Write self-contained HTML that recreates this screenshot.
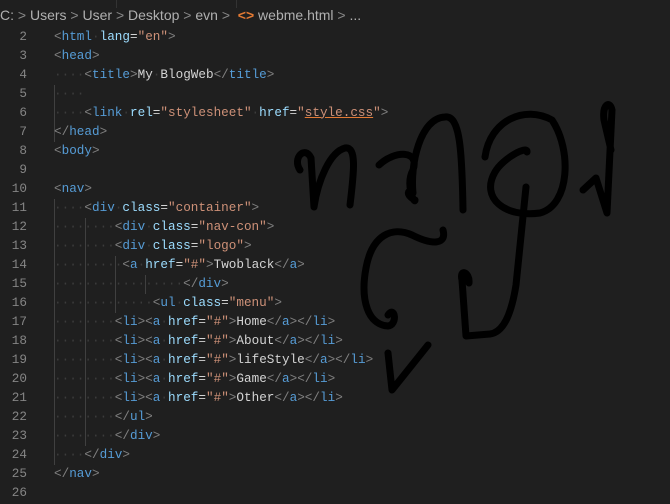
<!DOCTYPE html>
<html><head><meta charset="utf-8"><style>
html,body{margin:0;padding:0;width:670px;height:497px;overflow:hidden;background:#1f1f1f;}
.bc{position:absolute;left:0;top:0;width:670px;height:26px;font:14px "Liberation Sans",sans-serif;color:#b0b0b0;line-height:31px;white-space:pre;}
.l{position:absolute;left:0;width:670px;height:19px;line-height:19px;font:12.67px "Liberation Mono",monospace;white-space:pre;color:#d4d4d4;}
.n{position:absolute;left:0;width:27px;color:#858585;text-align:right;}
.c{position:absolute;left:54px;}
.p{color:#808080}.t{color:#569cd6}.a{color:#9cdcfe}.s{color:#ce9178}.d{color:#3c3c3c}
.g{position:absolute;width:1px;background:#404040;}
</style></head><body>
<div class="bc">C: <span style="color:#888">&gt;</span> Users <span style="color:#888">&gt;</span> User <span style="color:#888">&gt;</span> Desktop <span style="color:#888">&gt;</span> evn <span style="color:#888">&gt;</span>  <span style="color:#e37933;font-weight:bold">&lt;&gt;</span> webme.html <span style="color:#888">&gt;</span> ...</div>
<div style="position:absolute;left:116px;top:0;width:1px;height:8px;background:#333"></div>
<div style="position:absolute;left:236px;top:0;width:1px;height:8px;background:#333"></div>

<div class="g" style="left:54px;top:85px;height:57px"></div>
<div class="g" style="left:54px;top:199px;height:266px"></div>
<div class="g" style="left:85px;top:218px;height:228px"></div>
<div class="g" style="left:115px;top:256px;height:57px"></div>
<div class="g" style="left:145px;top:275px;height:19px"></div>

<div class="l" style="top:28.5px"><span class="n">2</span><span class="c"><span class="p">&lt;</span><span class="t">html</span><span class="d">·</span><span class="a">lang</span>=<span class="s">"en"</span><span class="p">&gt;</span></span></div>
<div class="l" style="top:47.5px"><span class="n">3</span><span class="c"><span class="p">&lt;</span><span class="t">head</span><span class="p">&gt;</span></span></div>
<div class="l" style="top:66.5px"><span class="n">4</span><span class="c"><span class="d">····</span><span class="p">&lt;</span><span class="t">title</span><span class="p">&gt;</span>My<span class="d">·</span>BlogWeb<span class="p">&lt;/</span><span class="t">title</span><span class="p">&gt;</span></span></div>
<div class="l" style="top:85.5px"><span class="n">5</span><span class="c"><span class="d">····</span></span></div>
<div class="l" style="top:104.5px"><span class="n">6</span><span class="c"><span class="d">····</span><span class="p">&lt;</span><span class="t">link</span><span class="d">·</span><span class="a">rel</span>=<span class="s">"stylesheet"</span><span class="d">·</span><span class="a">href</span>=<span class="s">"<u style="text-decoration-color:#e37933">style.css</u>"</span><span class="p">&gt;</span></span></div>
<div class="l" style="top:123.5px"><span class="n">7</span><span class="c"><span class="p">&lt;/</span><span class="t">head</span><span class="p">&gt;</span></span></div>
<div class="l" style="top:142.5px"><span class="n">8</span><span class="c"><span class="p">&lt;</span><span class="t">body</span><span class="p">&gt;</span></span></div>
<div class="l" style="top:161.5px"><span class="n">9</span></div>
<div class="l" style="top:180.5px"><span class="n">10</span><span class="c"><span class="p">&lt;</span><span class="t">nav</span><span class="p">&gt;</span></span></div>
<div class="l" style="top:199.5px"><span class="n">11</span><span class="c"><span class="d">····</span><span class="p">&lt;</span><span class="t">div</span><span class="d">·</span><span class="a">class</span>=<span class="s">"container"</span><span class="p">&gt;</span></span></div>
<div class="l" style="top:218.5px"><span class="n">12</span><span class="c"><span class="d">········</span><span class="p">&lt;</span><span class="t">div</span><span class="d">·</span><span class="a">class</span>=<span class="s">"nav-con"</span><span class="p">&gt;</span></span></div>
<div class="l" style="top:237.5px"><span class="n">13</span><span class="c"><span class="d">········</span><span class="p">&lt;</span><span class="t">div</span><span class="d">·</span><span class="a">class</span>=<span class="s">"logo"</span><span class="p">&gt;</span></span></div>
<div class="l" style="top:256.5px"><span class="n">14</span><span class="c"><span class="d">·········</span><span class="p">&lt;</span><span class="t">a</span><span class="d">·</span><span class="a">href</span>=<span class="s">"#"</span><span class="p">&gt;</span>Twoblack<span class="p">&lt;/</span><span class="t">a</span><span class="p">&gt;</span></span></div>
<div class="l" style="top:275.5px"><span class="n">15</span><span class="c"><span class="d">·················</span><span class="p">&lt;/</span><span class="t">div</span><span class="p">&gt;</span></span></div>
<div class="l" style="top:294.5px"><span class="n">16</span><span class="c"><span class="d">·············</span><span class="p">&lt;</span><span class="t">ul</span><span class="d">·</span><span class="a">class</span>=<span class="s">"menu"</span><span class="p">&gt;</span></span></div>
<div class="l" style="top:313.5px"><span class="n">17</span><span class="c"><span class="d">········</span><span class="p">&lt;</span><span class="t">li</span><span class="p">&gt;&lt;</span><span class="t">a</span><span class="d">·</span><span class="a">href</span>=<span class="s">"#"</span><span class="p">&gt;</span>Home<span class="p">&lt;/</span><span class="t">a</span><span class="p">&gt;&lt;/</span><span class="t">li</span><span class="p">&gt;</span></span></div>
<div class="l" style="top:332.5px"><span class="n">18</span><span class="c"><span class="d">········</span><span class="p">&lt;</span><span class="t">li</span><span class="p">&gt;&lt;</span><span class="t">a</span><span class="d">·</span><span class="a">href</span>=<span class="s">"#"</span><span class="p">&gt;</span>About<span class="p">&lt;/</span><span class="t">a</span><span class="p">&gt;&lt;/</span><span class="t">li</span><span class="p">&gt;</span></span></div>
<div class="l" style="top:351.5px"><span class="n">19</span><span class="c"><span class="d">········</span><span class="p">&lt;</span><span class="t">li</span><span class="p">&gt;&lt;</span><span class="t">a</span><span class="d">·</span><span class="a">href</span>=<span class="s">"#"</span><span class="p">&gt;</span>lifeStyle<span class="p">&lt;/</span><span class="t">a</span><span class="p">&gt;&lt;/</span><span class="t">li</span><span class="p">&gt;</span></span></div>
<div class="l" style="top:370.5px"><span class="n">20</span><span class="c"><span class="d">········</span><span class="p">&lt;</span><span class="t">li</span><span class="p">&gt;&lt;</span><span class="t">a</span><span class="d">·</span><span class="a">href</span>=<span class="s">"#"</span><span class="p">&gt;</span>Game<span class="p">&lt;/</span><span class="t">a</span><span class="p">&gt;&lt;/</span><span class="t">li</span><span class="p">&gt;</span></span></div>
<div class="l" style="top:389.5px"><span class="n">21</span><span class="c"><span class="d">········</span><span class="p">&lt;</span><span class="t">li</span><span class="p">&gt;&lt;</span><span class="t">a</span><span class="d">·</span><span class="a">href</span>=<span class="s">"#"</span><span class="p">&gt;</span>Other<span class="p">&lt;/</span><span class="t">a</span><span class="p">&gt;&lt;/</span><span class="t">li</span><span class="p">&gt;</span></span></div>
<div class="l" style="top:408.5px"><span class="n">22</span><span class="c"><span class="d">········</span><span class="p">&lt;/</span><span class="t">ul</span><span class="p">&gt;</span></span></div>
<div class="l" style="top:427.5px"><span class="n">23</span><span class="c"><span class="d">········</span><span class="p">&lt;/</span><span class="t">div</span><span class="p">&gt;</span></span></div>
<div class="l" style="top:446.5px"><span class="n">24</span><span class="c"><span class="d">····</span><span class="p">&lt;/</span><span class="t">div</span><span class="p">&gt;</span></span></div>
<div class="l" style="top:465.5px"><span class="n">25</span><span class="c"><span class="p">&lt;/</span><span class="t">nav</span><span class="p">&gt;</span></span></div>
<div class="l" style="top:484.5px"><span class="n">26</span></div>

<svg width="670" height="497" style="position:absolute;left:0;top:0" fill="none" stroke="#000" stroke-width="7" stroke-linecap="round" stroke-linejoin="round">
<path d="M300,170 C292,158 305,145 311,158 L314,207 C318,180 330,152 345,148 C357,146 354,172 350,205"/>
<path d="M379,165 C395,150 420,150 413,170 C405,185 415,205 415,200 C405,195 408,188 413,193 C410,165 420,118 445,117 C460,115 462,150 463,210"/>
<path d="M485,157 C490,120 525,105 552,120 C572,150 570,205 540,213 C505,218 480,198 495,172 C503,158 528,145 527,152"/>
<path d="M526,187 L516,285 C512,310 505,332 490,334 L466,336 L462,280 C459,268 470,272 469,283"/>
<path d="M583,190 L596,178 L607,213 L612,110 C610,100 602,104 604,120 L611,150"/>
<path d="M443,230 C447,245 432,245 412,235 C392,226 372,235 366,268 C360,300 368,325 388,326 C398,325 395,305 388,315"/>
<path d="M388,353 L392,390 L428,345"/>
</svg>
</body></html>
